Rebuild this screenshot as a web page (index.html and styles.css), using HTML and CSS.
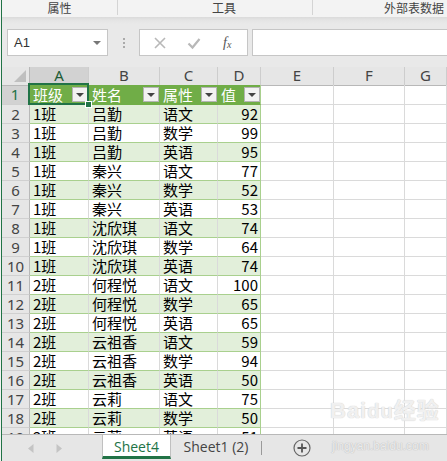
FILE: index.html
```html
<!DOCTYPE html>
<html lang="zh-CN">
<head>
<meta charset="utf-8">
<title>Sheet4</title>
<link rel="stylesheet" href="styles.css">
</head>
<body>
<div class="app">
  <div class="ribbon">
    <div class="rgroup g1">属性</div>
    <div class="rgroup g2">工具</div>
    <div class="rgroup g3">外部表数据</div>
  </div>
  <div class="fbar">
    <div class="namebox"><span>A1</span><span class="caret"></span></div>
    <div class="dots"><i></i><i></i><i></i></div>
    <div class="fxgroup">
      <svg class="fxi" width="14" height="14" viewBox="0 0 14 14"><path d="M2 2 L12 12 M12 2 L2 12" stroke="#b8b8b8" stroke-width="1.6" fill="none"/></svg>
      <svg class="fxi" width="14" height="14" viewBox="0 0 14 14"><path d="M1.5 7.5 L5.5 11.5 L12.5 3" stroke="#b8b8b8" stroke-width="2.2" fill="none"/></svg>
      <span class="fx">f<sub>x</sub></span>
    </div>
    <div class="finput"></div>
  </div>

  <div class="sheet">
    <div class="row hdr">
      <div class="corner"><span class="tri"></span></div>
      <div class="ch sel">A</div><div class="ch">B</div><div class="ch">C</div><div class="ch">D</div><div class="ch">E</div><div class="ch">F</div><div class="ch">G</div>
    </div>
    <div class="row r1">
      <div class="rh sel">1</div>
      <div class="c th a1">班级<span class="dd"></span><span class="selbox"><span class="handle"></span></span></div>
      <div class="c th">姓名<span class="dd"></span></div>
      <div class="c th">属性<span class="dd"></span></div>
      <div class="c th td">值<span class="dd"></span></div>
      <div class="c"></div><div class="c"></div><div class="c"></div>
    </div>
    <div class="row band"><div class="rh">2</div><div class="c t">1班</div><div class="c t">吕勤</div><div class="c t">语文</div><div class="c t n">92</div><div class="c"></div><div class="c"></div><div class="c"></div></div>
    <div class="row"><div class="rh">3</div><div class="c t">1班</div><div class="c t">吕勤</div><div class="c t">数学</div><div class="c t n">99</div><div class="c"></div><div class="c"></div><div class="c"></div></div>
    <div class="row band"><div class="rh">4</div><div class="c t">1班</div><div class="c t">吕勤</div><div class="c t">英语</div><div class="c t n">95</div><div class="c"></div><div class="c"></div><div class="c"></div></div>
    <div class="row"><div class="rh">5</div><div class="c t">1班</div><div class="c t">秦兴</div><div class="c t">语文</div><div class="c t n">77</div><div class="c"></div><div class="c"></div><div class="c"></div></div>
    <div class="row band"><div class="rh">6</div><div class="c t">1班</div><div class="c t">秦兴</div><div class="c t">数学</div><div class="c t n">52</div><div class="c"></div><div class="c"></div><div class="c"></div></div>
    <div class="row"><div class="rh">7</div><div class="c t">1班</div><div class="c t">秦兴</div><div class="c t">英语</div><div class="c t n">53</div><div class="c"></div><div class="c"></div><div class="c"></div></div>
    <div class="row band"><div class="rh">8</div><div class="c t">1班</div><div class="c t">沈欣琪</div><div class="c t">语文</div><div class="c t n">74</div><div class="c"></div><div class="c"></div><div class="c"></div></div>
    <div class="row"><div class="rh">9</div><div class="c t">1班</div><div class="c t">沈欣琪</div><div class="c t">数学</div><div class="c t n">64</div><div class="c"></div><div class="c"></div><div class="c"></div></div>
    <div class="row band"><div class="rh">10</div><div class="c t">1班</div><div class="c t">沈欣琪</div><div class="c t">英语</div><div class="c t n">74</div><div class="c"></div><div class="c"></div><div class="c"></div></div>
    <div class="row"><div class="rh">11</div><div class="c t">2班</div><div class="c t">何程悦</div><div class="c t">语文</div><div class="c t n">100</div><div class="c"></div><div class="c"></div><div class="c"></div></div>
    <div class="row band"><div class="rh">12</div><div class="c t">2班</div><div class="c t">何程悦</div><div class="c t">数学</div><div class="c t n">65</div><div class="c"></div><div class="c"></div><div class="c"></div></div>
    <div class="row"><div class="rh">13</div><div class="c t">2班</div><div class="c t">何程悦</div><div class="c t">英语</div><div class="c t n">65</div><div class="c"></div><div class="c"></div><div class="c"></div></div>
    <div class="row band"><div class="rh">14</div><div class="c t">2班</div><div class="c t">云祖香</div><div class="c t">语文</div><div class="c t n">59</div><div class="c"></div><div class="c"></div><div class="c"></div></div>
    <div class="row"><div class="rh">15</div><div class="c t">2班</div><div class="c t">云祖香</div><div class="c t">数学</div><div class="c t n">94</div><div class="c"></div><div class="c"></div><div class="c"></div></div>
    <div class="row band"><div class="rh">16</div><div class="c t">2班</div><div class="c t">云祖香</div><div class="c t">英语</div><div class="c t n">50</div><div class="c"></div><div class="c"></div><div class="c"></div></div>
    <div class="row"><div class="rh">17</div><div class="c t">2班</div><div class="c t">云莉</div><div class="c t">语文</div><div class="c t n">75</div><div class="c"></div><div class="c"></div><div class="c"></div></div>
    <div class="row band"><div class="rh">18</div><div class="c t">2班</div><div class="c t">云莉</div><div class="c t">数学</div><div class="c t n">50</div><div class="c"></div><div class="c"></div><div class="c"></div></div>
    <div class="row"><div class="rh">19</div><div class="c t">2班</div><div class="c t">云莉</div><div class="c t">英语</div><div class="c t n">51</div><div class="c"></div><div class="c"></div><div class="c"></div></div>
  </div>

  <div class="tabs">
    <div class="nav">
      <svg width="6" height="9" viewBox="0 0 6 9"><path d="M5.5 0 L0 4.5 L5.5 9 Z" fill="#c4c4c4"/></svg>
      <svg width="6" height="9" viewBox="0 0 6 9"><path d="M0.5 0 L6 4.5 L0.5 9 Z" fill="#c4c4c4"/></svg>
    </div>
    <div class="tab active">Sheet4</div>
    <div class="tab">Sheet1 (2)</div>
    <div class="vsep"></div>
    <div class="add">
      <svg width="18" height="18" viewBox="0 0 18 18"><circle cx="9" cy="9" r="8" fill="none" stroke="#666" stroke-width="1.2"/><path d="M9 4.5 V13.5 M4.5 9 H13.5" stroke="#555" stroke-width="1.8"/></svg>
    </div>
  </div>

  <div class="wm">
    <div class="wm1">Bai<span class="paw">du</span>经验</div>
    <div class="wm2">jingyan.baidu.com</div>
  </div>
</div>
</body>
</html>
```

FILE: styles.css
```css
* { box-sizing: border-box; }
html, body { margin: 0; padding: 0; }
body {
  background: #f3f3f3;
  width: 447px;
  height: 461px;
  overflow: hidden;
  font-family: "Noto Sans", "Noto Sans CJK SC", sans-serif;
}
.app {
  position: relative;
  margin-left: 1px;
  border-left: 1px solid #217346;
  height: 461px;
  overflow: hidden;
}

/* ribbon */
.ribbon {
  height: 17px;
  display: flex;
  align-items: flex-start;
  background: #f3f3f3;
  font-family: "Noto Sans CJK SC", sans-serif;
  font-size: 12px;
  color: #444;
  line-height: 15px;
}
.rgroup { text-align: center; border-right: 1px solid #d4d4d4; height: 15px; }
.g1 { width: 116px; }
.g2 { width: 195px; padding-left: 18px; }
.g3 { flex: 1; border-right: 0; text-align: right; padding-right: 3px; }

/* formula bar */
.fbar {
  height: 50px;
  background: linear-gradient(#dadada 0, #e4e4e4 3px, #e9e9e9 7px, #e9e9e9 100%);
  padding: 12px 0 11px 5px;
  display: flex;
  align-items: stretch;
}
.namebox {
  width: 101px;
  background: #fff;
  border: 1px solid #c6c6c6;
  display: flex;
  align-items: center;
  padding-left: 6px;
  font-family: "Liberation Sans", sans-serif;
  font-size: 13px;
  color: #333;
}
.caret {
  margin-left: auto;
  margin-right: 6px;
  width: 0; height: 0;
  border-left: 4px solid transparent;
  border-right: 4px solid transparent;
  border-top: 4px solid #777;
}
.dots {
  width: 31px;
  display: flex;
  flex-direction: column;
  align-items: center;
  justify-content: center;
  gap: 2px;
}
.dots i { display: block; width: 2px; height: 2px; background: #aaa; }
.fxgroup {
  width: 109px;
  background: #fff;
  border: 1px solid #c6c6c6;
  display: flex;
  align-items: center;
  padding-left: 13px;
  gap: 20px;
}
.fx {
  font-family: "Liberation Serif", serif;
  font-style: italic;
  font-size: 14px;
  color: #555;
  margin-left: 2px;
}
.fx sub { font-size: 10px; vertical-align: -1px; }
.finput {
  flex: 1;
  margin-left: 4px;
  background: #fff;
  border: 1px solid #c6c6c6;
  border-right: 0;
}

/* sheet */
.sheet {
  height: 367px;
  overflow: hidden;
  background: #fff;
}
.row {
  display: grid;
  grid-template-columns: 28px 59px 71px 58px 43px 73px 71px 42px;
  height: 19px;
}
.row.hdr { height: 18px; }
.row.r1 { height: 20px; }
.corner {
  position: relative;
  background: #e6e6e6;
  border-right: 1px solid #b8b8b8;
  border-bottom: 1px solid #b8b8b8;
}
.tri {
  position: absolute;
  right: 3px; bottom: 3px;
  width: 12px; height: 12px;
  background: #bfbfbf;
  clip-path: polygon(100% 0, 100% 100%, 0 100%);
}
.ch {
  background: #e6e6e6;
  border-right: 1px solid #cdcdcd;
  border-bottom: 1px solid #b8b8b8;
  text-align: center;
  font-family: "Noto Sans", sans-serif;
  font-size: 15px;
  line-height: 17px;
  color: #444;
}
.ch.sel { background: #d2d2d2; color: #1e5c36; border-bottom: 2px solid #217346; }
.rh {
  background: #e6e6e6;
  border-right: 1px solid #b8b8b8;
  border-bottom: 1px solid #d0d0d0;
  text-align: center;
  font-family: "Noto Sans", sans-serif;
  font-size: 15px;
  line-height: 18px;
  color: #444;
}
.rh.sel { background: #d2d2d2; color: #217346; border-right: 2px solid #217346; }
.c {
  border-right: 1px solid #dadada;
  border-bottom: 1px solid #dadada;
  font-family: "Noto Sans CJK SC", sans-serif;
  font-size: 15px;
  line-height: 18px;
  color: #000;
  padding-left: 3px;
  white-space: nowrap;
  overflow: hidden;
}
.c.t { border-bottom-color: #a9d08e; }
.band .c.t { background: #e2efda; }
.c.n { text-align: right; padding: 0 2px 0 0; border-right-color: #a9d08e; }
.c.th {
  position: relative;
  overflow: visible;
  background: #70ad47;
  color: #fff;
  display: flex;
  align-items: center;
  line-height: 19px;
  border-right-color: #70ad47;
  border-bottom-color: #70ad47;
}
.c.th.td { border-right-color: #a9d08e; }
.dd {
  margin-left: auto;
  margin-right: 0;
  width: 16px;
  height: 15px;
  background: #f2f2f2;
  border: 1px solid #b4b4b4;
  display: flex;
  align-items: center;
  justify-content: center;
}
.dd::after {
  content: "";
  width: 0; height: 0;
  border-left: 4px solid transparent;
  border-right: 4px solid transparent;
  border-top: 4px solid #444;
}
.a1 { z-index: 2; }
.selbox {
  position: absolute;
  left: -2px; top: -2px; right: -1px; bottom: -1px;
  border: 2px solid #217346;
  pointer-events: none;
}
.handle {
  position: absolute;
  right: -5px; bottom: -5px;
  width: 7px; height: 7px;
  background: #217346;
  border: 1px solid #fff;
}

/* tabs */
.tabs {
  height: 27px;
  background: #e6e6e6;
  border-top: 1px solid #b8b8b8;
  display: flex;
  align-items: stretch;
  font-family: "Open Sans", "Noto Sans", sans-serif;
  font-size: 14px;
  color: #444;
}
.nav {
  width: 100px;
  display: flex;
  align-items: center;
  padding-left: 26px;
  gap: 22px;
}
.tab {
  width: 90px;
  text-align: center;
  line-height: 23px;
}
.tab.active {
  width: 69px;
  background: #fff;
  color: #217346;
  border-left: 1px solid #c0c0c0;
  border-right: 1px solid #c0c0c0;
  border-bottom: 3px solid #217346;
  margin-bottom: 2px;
}
.vsep { width: 1px; background: #9a9a9a; margin: 6px 0 6px 0; }
.add { width: 80px; display: flex; align-items: center; justify-content: center; padding-bottom: 1px; }

/* watermark */
.wm {
  position: absolute;
  left: 328px;
  top: 398px;
  pointer-events: none;
  color: rgba(255,255,255,0.7);
  text-shadow: 0 0 1px #d2d2d2, 0 0 1px #d2d2d2;
  font-family: "Liberation Sans", "Noto Sans CJK SC", sans-serif;
}
.wm1 { font-size: 22px; font-weight: bold; line-height: 26px; letter-spacing: 1px; }
.wm1 .paw { font-size: 20px; }
.wm2 { font-size: 12px; line-height: 16px; margin-top: 14px; margin-left: 2px; text-shadow: 0 0 1px #bdbdbd, 0 0 1px #bdbdbd; }
```
